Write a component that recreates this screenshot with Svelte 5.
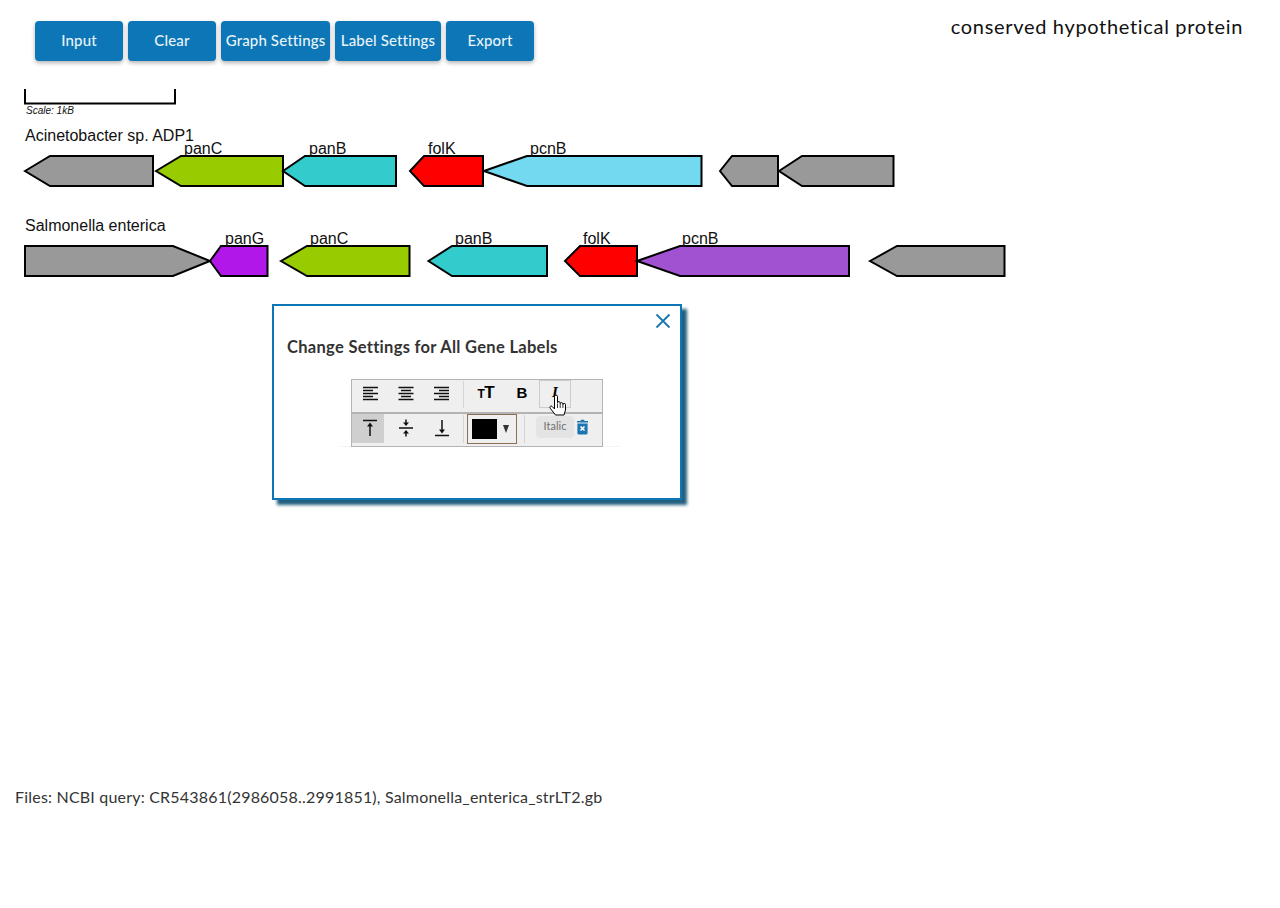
<script>
  const buttons = [
    { label: 'Input', width: 88 },
    { label: 'Clear', width: 88 },
    { label: 'Graph Settings', width: 109 },
    { label: 'Label Settings', width: 106 },
    { label: 'Export', width: 88 }
  ];
  const GRAY = '#999999', C = '#99cc00', B = '#33cccc', F = '#ff0000';
  // left-pointing gene: tip, shoulder, right end
  const left = (t, s, r, y) => `${t},${y + 15} ${s},${y} ${r},${y} ${r},${y + 30} ${s},${y + 30}`;
  const right = (l, s, t, y) => `${l},${y} ${s},${y} ${t},${y + 15} ${s},${y + 30} ${l},${y + 30}`;
  const Y1 = 76, Y2 = 166;
  const genes = [
    { p: left(25, 50, 153, Y1), f: GRAY },
    { p: left(156, 181, 283, Y1), f: C },
    { p: left(283, 305, 396, Y1), f: B },
    { p: left(410, 424, 483, Y1), f: F },
    { p: left(484, 527, 701.5, Y1), f: '#72d9f0' },
    { p: left(720, 732, 778, Y1), f: GRAY },
    { p: left(779, 802, 893.5, Y1), f: GRAY },
    { p: right(25, 173, 210, Y2), f: GRAY },
    { p: left(210, 221, 267.5, Y2), f: '#b217ea' },
    { p: left(281, 307, 409.5, Y2), f: C },
    { p: left(428.5, 452, 547, Y2), f: B },
    { p: left(565, 580, 637, Y2), f: F },
    { p: left(637, 680, 849, Y2), f: '#a052d0' },
    { p: left(870, 897, 1004.5, Y2), f: GRAY }
  ];
  const labels = [
    { t: 'panC', x: 184, y: 74 }, { t: 'panB', x: 309, y: 74 }, { t: 'folK', x: 428, y: 74 }, { t: 'pcnB', x: 530, y: 74 },
    { t: 'panG', x: 225, y: 164 }, { t: 'panC', x: 310, y: 164 }, { t: 'panB', x: 455, y: 164 }, { t: 'folK', x: 583, y: 164 }, { t: 'pcnB', x: 682, y: 164 }
  ];
</script>

<div class="page">
  <header class="top">
    <nav class="actions">
      {#each buttons as b}
        <button class="btn" style="width:{b.width}px">{b.label}</button>
      {/each}
    </nav>
    <div class="gene-title">conserved hypothetical protein</div>
  </header>

  <svg class="graph" width="1280" height="210" viewBox="0 0 1280 210">
    <polyline class="scale" points="25,9 25,23.5 175,23.5 175,9" />
    <text class="scale-text" x="26" y="34">Scale: 1kB</text>
    <text class="label" x="25" y="61">Acinetobacter sp. ADP1</text>
    <text class="label" x="25" y="151">Salmonella enterica</text>
    {#each genes as g}
      <polygon class="gene" points={g.p} fill={g.f} />
    {/each}
    {#each labels as l}
      <text class="label" x={l.x} y={l.y}>{l.t}</text>
    {/each}
  </svg>

  <footer class="files">Files: NCBI query: CR543861(2986058..2991851), Salmonella_enterica_strLT2.gb</footer>

  <section class="modal">
    <button class="close" aria-label="Close">
      <svg width="16" height="16" viewBox="0 0 16 16"><path d="M1.5 1.5 L14.5 14.5 M14.5 1.5 L1.5 14.5" /></svg>
    </button>
    <h2>Change Settings for All Gene Labels</h2>
    <div class="toolbar">
      <div class="row row-a">
        <span class="cell">
          <svg class="ico" width="16" height="16" viewBox="-1 0 16 16"><path d="M0 1.5H15M0 4.5H10M0 7.5H15M0 10.5H10M0 13.5H15" /></svg>
        </span>
        <span class="cell">
          <svg class="ico" width="16" height="16" viewBox="0 0 16 16"><path d="M0.5 1.5H15.5M3 4.5H13M0.5 7.5H15.5M3 10.5H13M0.5 13.5H15.5" /></svg>
        </span>
        <span class="cell">
          <svg class="ico" width="16" height="16" viewBox="0 0 16 16"><path d="M0 1.5H15M5 4.5H15M0 7.5H15M5 10.5H15M0 13.5H15" /></svg>
        </span>
        <span class="sep"></span>
        <span class="cell tt"><span class="small-t">T</span><span class="big-t">T</span></span>
        <span class="cell bold">B</span>
        <span class="cell italic hover">I
          <svg class="hand" width="18" height="22" viewBox="0 0 18 22">
            <path d="M5.5 12 V2.6 a1.5 1.5 0 0 1 3 0 V8.6 a1.4 1.4 0 0 1 2.7 .2 V9.6 a1.4 1.4 0 0 1 2.7 .2 V10.6 a1.3 1.3 0 0 1 2.6 .2 V16 L15 21 H6.5 L1.2 14.2 a1.3 1.3 0 0 1 2 -1.7 L5.5 15 Z" />
            <path d="M8.5 9.5 V14 M11.2 9.8 V14 M13.9 10.6 V14" />
          </svg>
        </span>
      </div>
      <div class="row row-b">
        <span class="cell active">
          <svg class="ico" width="16" height="18" viewBox="0 0 16 18"><path d="M1 1.5H15M8 5V17" /><path class="fill" d="M8 3.5 L11 7.5 H5 Z" /></svg>
        </span>
        <span class="cell">
          <svg class="ico" width="16" height="18" viewBox="0 0 16 18"><path d="M1 9H15M8 0.5V4M8 14V17.5" /><path class="fill" d="M8 7 L5 3.5 H11 Z M8 11 L5 14.5 H11 Z" /></svg>
        </span>
        <span class="cell">
          <svg class="ico" width="16" height="18" viewBox="0 0 16 18"><path d="M1 16.5H15M8 1V13" /><path class="fill" d="M8 14.5 L5 10.5 H11 Z" /></svg>
        </span>
        <span class="sep"></span>
        <span class="picker"><span class="swatch"></span><span class="caret"></span></span>
        <span class="sep second"></span>
        <span class="chip">Italic</span>
        <svg class="trash" width="13" height="16" viewBox="0 0 13 16">
          <path d="M1 3.4 H12 V2 H8.6 L8 .8 H5 L4.4 2 H1 Z M1.4 4.4 H11.6 V14 a1.6 1.6 0 0 1 -1.6 1.6 H3 A1.6 1.6 0 0 1 1.4 14 Z" fill="#1b75b0" />
          <path d="M4.5 7.5 L8.5 11.5 M8.5 7.5 L4.5 11.5" stroke="#fff" stroke-width="1.7" fill="none" />
        </svg>
      </div>
    </div>
  </section>
</div>

<style>
  :global(body) {
    margin: 0;
    background: #fff;
  }
  .page {
    position: relative;
    width: 1280px;
    height: 908px;
    font-family: Lato, "Open Sans", sans-serif;
    color: #333;
  }
  .top {
    display: flex;
    justify-content: space-between;
    align-items: flex-start;
    height: 80px;
    padding: 14px 37px 0 35px;
    box-sizing: border-box;
  }
  .actions {
    display: flex;
    gap: 5px;
    margin-top: 7px;
  }
  .btn {
    height: 40px;
    padding: 0 0 2px;
    border: 0;
    border-radius: 4px;
    background: #0d76b6;
    color: #e9f3f9;
    font: 500 15px Lato, sans-serif;
    letter-spacing: 0.15px;
    white-space: nowrap;
    box-shadow: 0 2px 4px rgba(0, 0, 0, 0.3);
  }
  .gene-title {
    font-size: 20px;
    line-height: 24px;
    color: #111;
    letter-spacing: 0.68px;
  }
  .graph {
    display: block;
  }
  .scale {
    fill: none;
    stroke: #000;
    stroke-width: 2;
  }
  .scale-text {
    font: italic 10px "Liberation Sans", Arial, sans-serif;
    fill: #111;
  }
  .label {
    font: 16px "Liberation Sans", Arial, sans-serif;
    fill: #111;
  }
  .gene {
    stroke: #000;
    stroke-width: 2;
  }
  .files {
    margin-top: 497px;
    padding-left: 15px;
    font-size: 16px;
    line-height: 20px;
    letter-spacing: 0.2px;
    color: #333;
  }
  .modal {
    position: absolute;
    z-index: 1;
    left: 272px;
    top: 304px;
    width: 410px;
    height: 196px;
    box-sizing: border-box;
    border: 2px solid #0d76b6;
    background: #fff;
    box-shadow: 5px 5px 3px #22607f;
    padding: 31px 13px 0;
  }
  .close {
    position: absolute;
    top: 7px;
    right: 9px;
    width: 16px;
    height: 16px;
    padding: 0;
    border: 0;
    background: none;
  }
  .close svg {
    display: block;
  }
  .close path {
    stroke: #1b75b0;
    stroke-width: 1.8;
    fill: none;
  }
  h2 {
    margin: 0;
    font-size: 16.5px;
    line-height: 20px;
    font-weight: 700;
    letter-spacing: 0.3px;
    color: #333;
  }
  .toolbar {
    position: relative;
    width: 252px;
    height: 68px;
    margin: 22px 0 0 64px;
    box-sizing: border-box;
    border: 1px solid #b3b3b3;
    background: #efefef;
    display: flex;
    flex-direction: column;
  }
  .toolbar::after {
    content: "";
    position: absolute;
    left: -12px;
    right: -18px;
    bottom: -1px;
    height: 1px;
    background: #f3f3f3;
    z-index: -1;
  }
  .row {
    display: flex;
    align-items: stretch;
    box-sizing: border-box;
  }
  .row-a {
    height: 34px;
    padding-bottom: 5px;
    border-bottom: 2px solid #b3b3b3;
  }
  .row-b {
    flex: 1;
  }
  .row-b .cell {
    height: 27px;
  }
  .cell {
    width: 36px;
    display: flex;
    align-items: center;
    justify-content: center;
    flex: none;
    color: #000;
  }
  .ico {
    display: block;
    overflow: visible;
  }
  .ico path {
    stroke: #111;
    stroke-width: 1.5;
    fill: none;
  }
  .ico path.fill {
    fill: #111;
    stroke: none;
  }
  .sep {
    width: 1px;
    margin: 1px 3px 3px 3px;
    background: #d5d5d5;
    flex: none;
  }
  .row-a .sep {
    margin-bottom: -1px;
    margin-right: 4px;
  }
  .tt {
    align-items: baseline;
    padding-top: 2px;
    box-sizing: border-box;
    font-family: "Liberation Sans", sans-serif;
    font-weight: 700;
    line-height: 22px;
  }
  .small-t {
    font-size: 12px;
    margin-right: -0.5px;
  }
  .big-t {
    font-size: 17px;
  }
  .bold {
    font: 700 15px "Liberation Sans", sans-serif;
    padding-bottom: 2px;
    box-sizing: border-box;
  }
  .italic {
    font: italic 700 15px "Liberation Serif", serif;
  }
  .hover {
    position: relative;
    width: 32px;
    height: 28px;
    margin: 0 0 0 -1px;
    padding-bottom: 3px;
    box-sizing: border-box;
    border: 1px solid #ccc;
  }
  .hand {
    position: absolute;
    left: 9px;
    top: 13px;
    overflow: visible;
  }
  .hand path {
    fill: #fff;
    stroke: #000;
    stroke-width: 1;
  }
  .hand path + path {
    fill: none;
    stroke-width: 0.8;
  }
  .row-b .active {
    width: 32px;
    height: 29px;
    margin-right: 4px;
    padding: 0 0 2px 4px;
    box-sizing: border-box;
    background: #cfcfcf;
  }
  .picker {
    width: 50px;
    height: 30px;
    box-sizing: border-box;
    border: 1px solid #8b6f55;
    display: flex;
    align-items: center;
    padding-left: 4px;
    gap: 6px;
    flex: none;
  }
  .swatch {
    width: 25px;
    height: 20px;
    background: #000;
  }
  .caret {
    width: 0;
    height: 0;
    border-left: 3.5px solid transparent;
    border-right: 3.5px solid transparent;
    border-top: 8px solid #333;
  }
  .second {
    margin-left: 7px;
    margin-right: 11px;
  }
  .chip {
    width: 38px;
    height: 22px;
    margin-top: 2px;
    border-radius: 4px;
    background: #e4e4e4;
    color: #707070;
    font-size: 11px;
    line-height: 20px;
    text-align: center;
    flex: none;
  }
  .trash {
    margin: 5px 0 0 2px;
    flex: none;
  }
</style>
